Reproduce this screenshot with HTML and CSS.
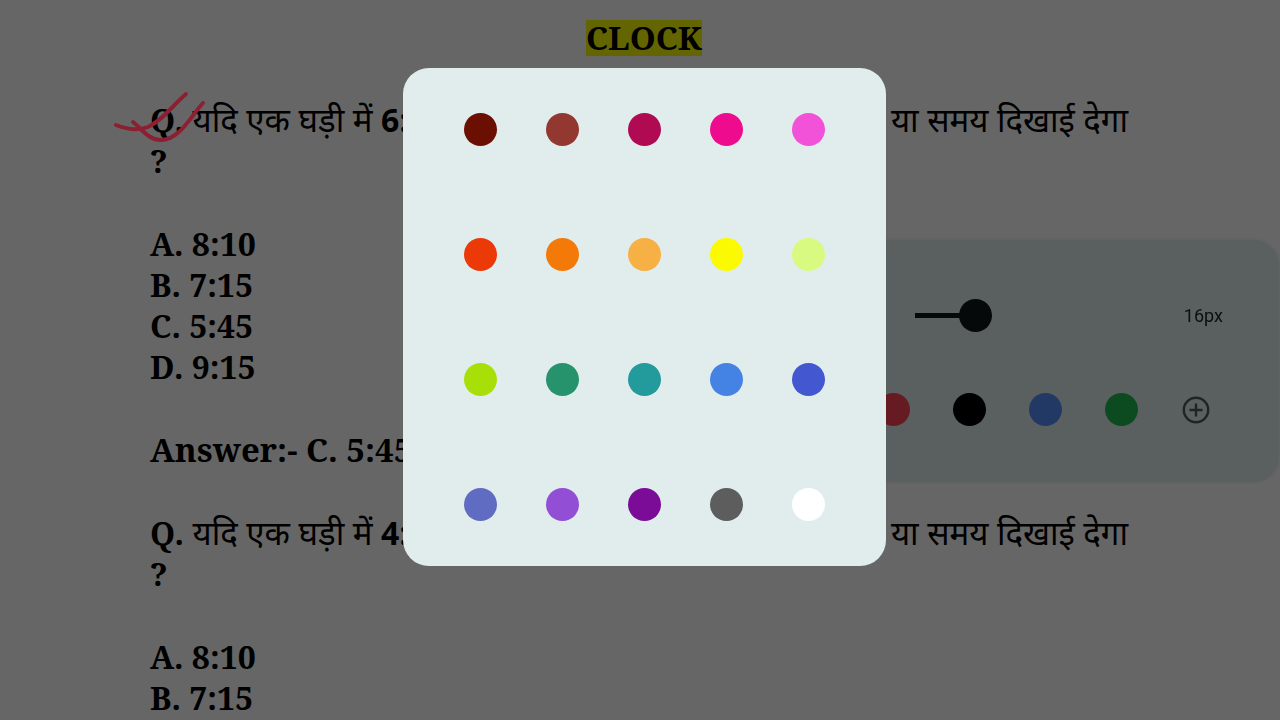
FILE: index.html
```html
<!DOCTYPE html>
<html lang="hi">
<head>
<meta charset="utf-8">
<meta name="viewport" content="width=device-width, initial-scale=1">
<title>Clock</title>
<link rel="stylesheet" href="styles.css">
</head>
<body>
<main class="sheet">
  <h1 class="title"><mark>CLOCK</mark></h1>
  <section class="block">
    <p class="line question"><span><b>Q.</b> यदि एक घड़ी में <b>6:</b></span><span>या समय दिखाई देगा</span></p>
    <p class="line"><b>?</b></p>
  </section>
  <section class="block">
    <p class="line"><b>A. 8:10</b></p>
    <p class="line"><b>B. 7:15</b></p>
    <p class="line"><b>C. 5:45</b></p>
    <p class="line"><b>D. 9:15</b></p>
  </section>
  <p class="line answer"><b>Answer:- C. 5:45</b></p>
  <section class="block">
    <p class="line question"><span><b>Q.</b> यदि एक घड़ी में <b>4:</b></span><span>या समय दिखाई देगा</span></p>
    <p class="line"><b>?</b></p>
  </section>
  <section class="block">
    <p class="line"><b>A. 8:10</b></p>
    <p class="line"><b>B. 7:15</b></p>
  </section>
</main>

<aside class="pen-panel">
  <div class="size-row">
    <input class="size" type="range" min="0" max="76" value="16" aria-label="Pen size">
    <output class="size-value">16px</output>
  </div>
  <div class="pen-colors">
    <button class="dot pen-red" aria-label="Red"></button>
    <button class="dot pen-black" aria-label="Black"></button>
    <button class="dot pen-blue" aria-label="Blue"></button>
    <button class="dot pen-green" aria-label="Green"></button>
    <button class="add" aria-label="Add color">
      <svg width="28" height="28" viewBox="0 0 28 28" fill="none" stroke="currentColor" stroke-width="2.4"><circle cx="14" cy="14" r="12.2"/><path d="M14 7.5v13M7.5 14h13"/></svg>
    </button>
  </div>
</aside>

<div class="overlay">
  <svg class="ink" width="100" height="60" viewBox="0 0 100 60" fill="none" stroke="#8b2032" stroke-width="4" stroke-linecap="round" stroke-linejoin="round" aria-hidden="true">
    <path d="M6 37C16 41 28 43 38 39C52 33 63 17 76 6"/>
    <path d="M23 34C31 40 39 53 52 52C70 51 81 28 93 15"/>
  </svg>
  <div class="picker" role="dialog" aria-label="Choose color">
    <button class="dot c1" aria-label="Maroon"></button>
    <button class="dot c2" aria-label="Brick"></button>
    <button class="dot c3" aria-label="Crimson"></button>
    <button class="dot c4" aria-label="Magenta"></button>
    <button class="dot c5" aria-label="Pink"></button>
    <button class="dot c6" aria-label="Vermilion"></button>
    <button class="dot c7" aria-label="Orange"></button>
    <button class="dot c8" aria-label="Apricot"></button>
    <button class="dot c9" aria-label="Yellow"></button>
    <button class="dot c10" aria-label="Pale lime"></button>
    <button class="dot c11" aria-label="Lime"></button>
    <button class="dot c12" aria-label="Jade"></button>
    <button class="dot c13" aria-label="Teal"></button>
    <button class="dot c14" aria-label="Sky blue"></button>
    <button class="dot c15" aria-label="Royal blue"></button>
    <button class="dot c16" aria-label="Slate blue"></button>
    <button class="dot c17" aria-label="Lavender"></button>
    <button class="dot c18" aria-label="Purple"></button>
    <button class="dot c19" aria-label="Gray"></button>
    <button class="dot c20" aria-label="White"></button>
  </div>
</div>
</body>
</html>
```

FILE: styles.css
```css
* { box-sizing: border-box; }
body {
  margin: 0;
  background: #fff;
  color: #000;
  overflow: hidden;
}
.sheet {
  display: flex;
  flex-direction: column;
  gap: 42px;
  padding: 16px 142px 0 150px;
  font: 32px/41px "Noto Serif", "Liberation Serif", serif;
}
.title {
  margin: 0;
  font-size: 33px;
  line-height: 41px;
  height: 41px;
  text-align: center;
}
.title mark {
  display: inline-block;
  line-height: 36px;
  margin-top: 4px;
  background: #f8ff00;
  color: #000;
}
.line { margin: 0; height: 41px; white-space: nowrap; }
.question {
  display: flex;
  justify-content: space-between;
  padding-right: 10px;
  font-family: "Noto Sans", sans-serif;
  font-size: 33px;
}
.question b { font-size: 32px; }
.question b:first-child { font-family: "Noto Serif", serif; }
.answer { font-size: 33px; }
.pen-panel {
  position: fixed;
  top: 241px;
  right: 2px;
  width: 420px;
  height: 240px;
  padding: 58px 55px 0 0;
  border-radius: 24px;
  background: #e1eeed;
  box-shadow: 0 0 4px #cfd6d6;
}
.size-row {
  display: flex;
  align-items: center;
  justify-content: space-between;
  padding-left: 57px;
}
.size {
  appearance: none;
  width: 240px;
  height: 33px;
  margin: 0;
  background: linear-gradient(#10181a, #10181a) 0 50% / 50px 5px no-repeat;
}
.size::-webkit-slider-thumb {
  appearance: none;
  width: 33px;
  height: 33px;
  border-radius: 50%;
  background: #10181a;
}
.size-value {
  font: 18px/24px "Roboto", sans-serif;
  color: #202628;
}
.pen-colors {
  display: flex;
  align-items: center;
  justify-content: flex-end;
  gap: 43px;
  margin-top: 61px;
  padding-right: 13px;
}
.dot {
  width: 33px;
  height: 33px;
  padding: 0;
  border: 0;
  border-radius: 50%;
}
.add {
  display: flex;
  margin-left: 1px;
  padding: 0;
  border: 0;
  background: none;
  color: #505a5c;
}
.pen-red { background: #ff4458; }
.pen-black { background: #000; }
.pen-blue { background: #5590ff; }
.pen-green { background: #1fbb50; }
.overlay {
  position: fixed;
  inset: 0;
  display: flex;
  align-items: flex-start;
  justify-content: center;
  padding: 68px 0 0 9px;
  background: rgba(0, 0, 0, .6);
}
.ink { position: absolute; left: 110px; top: 88px; }
.picker {
  display: grid;
  grid-template-columns: repeat(5, 33px);
  gap: 92px 49px;
  padding: 45px 61px;
  border-radius: 26px;
  background: #e1eded;
}
.c1 { background: #6b0f02; }
.c2 { background: #933830; }
.c3 { background: #b00a53; }
.c4 { background: #ee0b8e; }
.c5 { background: #f152d7; }
.c6 { background: #eb3a08; }
.c7 { background: #f37a08; }
.c8 { background: #f6b044; }
.c9 { background: #fbfa03; }
.c10 { background: #d8fa80; }
.c11 { background: #a9df09; }
.c12 { background: #27936c; }
.c13 { background: #239a9b; }
.c14 { background: #4482e3; }
.c15 { background: #4257d0; }
.c16 { background: #606cc2; }
.c17 { background: #924fd5; }
.c18 { background: #7b0c98; }
.c19 { background: #5d5d5d; }
.c20 { background: #fff; }
```
